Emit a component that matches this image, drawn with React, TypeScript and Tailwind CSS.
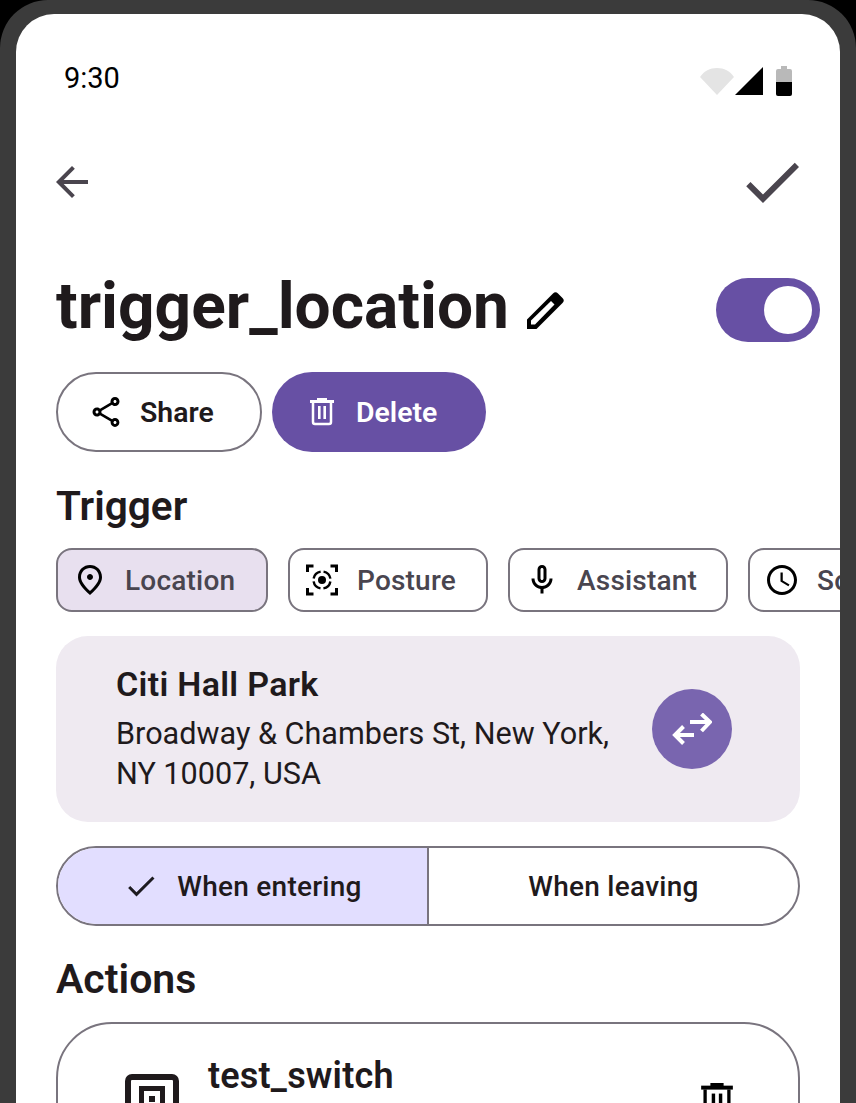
import React from "react";

const I = ({ d, size, className = "" }: { d: string; size: number; className?: string }) => (
  <svg width={size} height={size} viewBox="0 0 24 24" fill="currentColor" className={"shrink-0 " + className}>
    <path d={d} />
  </svg>
);

const back = "M20 11H7.83l5.59-5.59L12 4l-8 8 8 8 1.41-1.41L7.83 13H20v-2z";
const check = "M9 16.17L4.83 12l-1.42 1.41L9 19 21 7l-1.41-1.41z";
const share = "M18 16.08c-.76 0-1.44.3-1.96.77L8.91 12.7c.05-.23.09-.46.09-.7s-.04-.47-.09-.7l7.05-4.11c.54.5 1.25.81 2.04.81 1.66 0 3-1.34 3-3s-1.34-3-3-3-3 1.34-3 3c0 .24.04.47.09.7L8.04 9.81C7.5 9.31 6.79 9 6 9c-1.66 0-3 1.34-3 3s1.34 3 3 3c.79 0 1.5-.31 2.04-.81l7.12 4.16c-.05.21-.08.43-.08.65 0 1.61 1.31 2.92 2.92 2.92 1.61 0 2.92-1.31 2.92-2.92s-1.31-2.92-2.92-2.92zM18 4c.55 0 1 .45 1 1s-.45 1-1 1-1-.45-1-1 .45-1 1-1zM6 13c-.55 0-1-.45-1-1s.45-1 1-1 1 .45 1 1-.45 1-1 1zm12 7.02c-.55 0-1-.45-1-1s.45-1 1-1 1 .45 1 1-.45 1-1 1z";
const place = "M12 12c-1.1 0-2-.9-2-2s.9-2 2-2 2 .9 2 2-.9 2-2 2zm6-1.8C18 6.57 15.35 4 12 4s-6 2.57-6 6.2c0 2.34 1.95 5.44 6 9.14 4.05-3.7 6-6.8 6-9.14zM12 2c4.2 0 8 3.22 8 8.2 0 3.32-2.67 7.25-8 11.8-5.33-4.55-8-8.48-8-11.8C4 5.22 7.8 2 12 2z";
const mic = "M12 14c1.66 0 3-1.34 3-3V5c0-1.66-1.34-3-3-3S9 3.34 9 5v6c0 1.66 1.34 3 3 3zm-1-9c0-.55.45-1 1-1s1 .45 1 1v6c0 .55-.45 1-1 1s-1-.45-1-1V5zm6 6c0 2.76-2.24 5-5 5s-5-2.24-5-5H5c0 3.53 2.61 6.43 6 6.92V21h2v-3.08c3.39-.49 6-3.39 6-6.92h-2z";
const clock = "M11.99 2C6.47 2 2 6.48 2 12s4.47 10 9.99 10C17.52 22 22 17.52 22 12S17.52 2 11.99 2zM12 20c-4.42 0-8-3.58-8-8s3.58-8 8-8 8 3.58 8 8-3.58 8-8 8zm.5-13H11v6l5.25 3.15.75-1.23-4.5-2.67z";

const Trash = ({ w, h, className = "" }: { w: number; h: number; className?: string }) => (
  <svg width={w} height={h} viewBox="0 0 24 28" fill="currentColor" className={"shrink-0 " + className}>
    <rect x="7" y="0" width="10" height="3" />
    <rect x="0" y="2" width="24" height="3" />
    <path d="M3 5v19a2 2 0 0 0 2 2h14a2 2 0 0 0 2-2V5" fill="none" stroke="currentColor" strokeWidth="2.5" />
    <rect x="8" y="8" width="2.6" height="13" />
    <rect x="13.4" y="8" width="2.6" height="13" />
  </svg>
);

const Pencil = () => (
  <svg width="37" height="37" viewBox="0 0 37 37" className="shrink-0">
    <path d="M0 27.5L26 1.5a3.5 3.5 0 0 1 5 0l4.5 4.5a3.5 3.5 0 0 1 0 5L9.5 37H0z" fill="#000" />
    <path d="M4 28.5L24 9l3.5 3.5L8 32.5H4z" fill="#fff" />
  </svg>
);

const Posture = () => (
  <svg width="36" height="36" viewBox="0 0 36 36" fill="none" stroke="currentColor" className="shrink-0">
    <path strokeWidth="3" d="M3.5 10V4h6M26.500 4h6v6M32.500 26v6h-6M9.500 32h-6v-6" />
    <circle cx="18" cy="18" r="4" fill="currentColor" stroke="none" />
    <circle cx="18" cy="18" r="8.500" strokeWidth="2.400" strokeDasharray="10.300 3" strokeDashoffset="-1.500" />
  </svg>
);

const Chip = ({ icon, label, selected, w }: { icon: React.ReactNode; label: string; selected?: boolean; w: string }) => (
  <div className={`flex h-16 shrink-0 items-center gap-[17px] rounded-2xl border-2 border-[#79747e] pl-[14px] text-[28px] font-[480] tracking-[0.2px] text-[#49454f] ${w} ${selected ? "bg-[#e8e0ef]" : "bg-white"}`}>
    <span className="text-black">{icon}</span>
    <span className="pt-[2px]">{label}</span>
  </div>
);

export default function App() {
  return (
    <div className="h-[1103px] overflow-hidden bg-black font-['Roboto',sans-serif]">
      <div className="h-full rounded-t-[48px] bg-[#3b3b3b] px-4 pt-[14px]">
        <div className="h-full overflow-hidden rounded-t-[38px] bg-white text-[#1f1a1c]">
          <div className="flex h-[132px] items-start justify-between pl-12 pr-10 pt-[47px]">
            <span className="text-[29px] leading-[34px] text-black">9:30</span>
            <div className="flex items-start pt-[5px]">
              <svg width="36" height="28" viewBox="0 0 36 28" className="mt-px"><path d="M1 10C5 4 11 1 18 1s13 3 17 9L18 28z" fill="#e4e4e4" /></svg>
              <svg width="28" height="28" viewBox="0 0 28 28" className="mt-px"><path d="M0 28L28 0v28z" fill="#000" /></svg>
              <svg width="32" height="32" viewBox="0 0 32 32" className="ml-[5px]"><path d="M13 0h6v3h3a2 2 0 0 1 2 2v11H8V5a2 2 0 0 1 2-2h3z" fill="#b9b9b9" /><path d="M8 16h16v12a2 2 0 0 1-2 2H10a2 2 0 0 1-2-2z" fill="#000" /></svg>
            </div>
          </div>

          <div className="flex h-[72px] items-center justify-between pl-8 pr-[32px] text-[#4a454e]">
            <I d={back} size={48} />
            <I d={check} size={72} />
          </div>

          <div className="mt-[60px] flex h-[64px] items-center justify-between pl-10 pr-5">
            <div className="flex items-center gap-[18px]">
              <h1 className="pb-[6px] text-[64px] font-bold leading-[64px]">trigger_location</h1>
              <Pencil />
            </div>
            <div className="flex h-16 w-[104px] items-center justify-end rounded-full bg-[#6750a4] pr-2">
              <div className="size-12 rounded-full bg-white" />
            </div>
          </div>

          <div className="mt-[30px] flex gap-[10px] pl-10">
            <div className="flex h-20 w-[206px] items-center gap-[16px] rounded-full border-2 border-[#79747e] pl-[30px] text-[28.4px] font-semibold">
              <I d={share} size={36} className="text-black" />
              <span className="pt-[2px]">Share</span>
            </div>
            <div className="flex h-20 w-[214px] items-center gap-[22px] rounded-full bg-[#6750a4] pl-[38px] text-[28.4px] font-semibold text-white">
              <Trash w={24} h={28} />
              <span className="pt-[2px]">Delete</span>
            </div>
          </div>

          <h2 className="mt-[32px] pl-10 text-[40.6px] font-semibold leading-[44px]">Trigger</h2>

          <div className="mt-[20px] flex gap-[20px] overflow-hidden pl-10">
            <Chip icon={<I d={place} size={36} />} label="Location" selected w="w-[212px]" />
            <Chip icon={<Posture />} label="Posture" w="w-[200px]" />
            <Chip icon={<I d={mic} size={36} />} label="Assistant" w="w-[220px]" />
            <Chip icon={<I d={clock} size={36} />} label="Schedule" w="w-[214px]" />
          </div>

          <div className="ml-10 mt-6 flex h-[186px] w-[744px] items-center justify-between rounded-[32px] bg-[#efeaf1] pl-[60px] pr-[68px]">
            <div>
              <div className="text-[34px] font-semibold leading-10 tracking-[0.3px]">Citi Hall Park</div>
              <div className="mt-[10px] w-[510px] text-[30.6px] leading-10">Broadway &amp; Chambers St, New York, NY 10007, USA</div>
            </div>
            <div className="flex size-20 shrink-0 items-center justify-center rounded-full bg-[#7965af] text-white">
              <svg width="40" height="32" viewBox="0 0 40 32" fill="none" stroke="currentColor" strokeWidth="4">
                <path d="M18 9h20M29.500 1l8.500 8-8.500 9" />
                <path d="M22 22H3M11.500 13.500L3 22l8.500 8.500" />
              </svg>
            </div>
          </div>

          <div className="ml-10 mt-6 flex h-20 w-[744px] overflow-hidden rounded-full border-2 border-[#79747e] text-[28px] font-[480] tracking-[0.25px]">
            <div className="flex w-[371px] items-center justify-center gap-[18px] border-r-2 border-[#79747e] bg-[#e2deff]">
              <I d={check} size={36} className="text-[#1d1b20]" />
              <span className="pt-[2px]">When entering</span>
            </div>
            <div className="flex flex-1 items-center justify-center pt-[2px]">When leaving</div>
          </div>

          <h2 className="mt-[31px] pl-10 text-[41px] font-semibold leading-[44px]">Actions</h2>

          <div className="ml-10 mt-[21px] flex h-[200px] w-[744px] items-start justify-between rounded-[56px] border-2 border-[#79747e] pl-[67px] pr-[64px]">
            <svg width="54" height="64" viewBox="0 0 54 64" fill="none" stroke="#1f1a1c" strokeWidth="6" className="mt-[50px] shrink-0">
              <rect x="3" y="3" width="48" height="58" rx="4" />
              <rect x="16.500" y="14.500" width="21" height="30" strokeWidth="5" />
              <rect x="24" y="22" width="6" height="6" fill="#1f1a1c" stroke="none" />
            </svg>
            <div className="mt-[30px] flex-1 pl-[29px] text-[36px] font-semibold leading-[44px] tracking-[0.2px]">test_switch</div>
            <Trash w={32} h={37} className="mt-[59px] mr-[1px] text-black" />
          </div>
        </div>
      </div>
    </div>
  );
}
